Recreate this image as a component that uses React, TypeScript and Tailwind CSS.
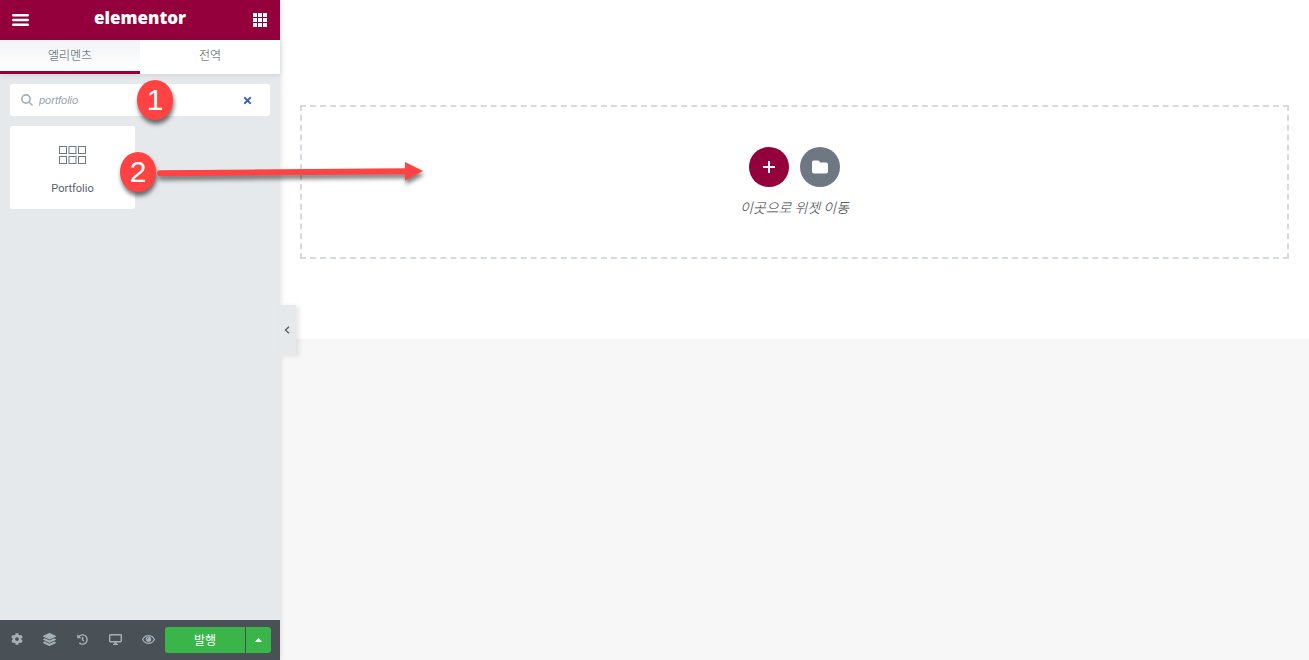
import { useState } from "react";
import type { ReactNode } from "react";
import { FaCog, FaHistory, FaLayerGroup, FaTimes } from "react-icons/fa";

const GridIcon = () => (
  <svg width="14" height="14" viewBox="0 0 14 14" fill="currentColor">
    {[0, 5, 10].map((y) =>
      [0, 5, 10].map((x) => <rect key={`${x}-${y}`} x={x} y={y} width="4" height="4" />)
    )}
  </svg>
);

const MenuIcon = () => (
  <svg width="17" height="12" viewBox="0 0 17 12" stroke="currentColor" strokeWidth="2.4" strokeLinecap="round">
    <path d="M1.2 1.3h14.6M1.2 6h14.6M1.2 10.7h14.6" />
  </svg>
);

const SearchIcon = () => (
  <svg width="12" height="12" viewBox="0 0 12 12" fill="none" stroke="currentColor" strokeWidth="1.6" strokeLinecap="round">
    <circle cx="5" cy="5" r="4.100" />
    <path d="M8.200 8.200L11 11" />
  </svg>
);

const GalleryIcon = () => (
  <svg width="27" height="19" viewBox="0 0 27 19" fill="none" stroke="currentColor" strokeWidth="1">
    {[0, 10].map((y) =>
      [0, 9.5, 19].map((x) => <rect key={`${x}-${y}`} x={x + 0.5} y={y + 0.5} width="7" height="7" />)
    )}
  </svg>
);

const DesktopIcon = () => (
  <svg width="13" height="11" viewBox="0 0 13 11" fill="none" stroke="currentColor">
    <rect x="0.7" y="0.7" width="11.6" height="7" rx="0.6" strokeWidth="1.4" />
    <path d="M6.5 7.5v2.5" strokeWidth="2.4" />
    <path d="M4 10.4h5" strokeWidth="1.2" />
  </svg>
);

const EyeIcon = () => (
  <svg width="13" height="9" viewBox="0 0 13 9" fill="none" stroke="currentColor">
    <path d="M.6 4.500C1.800 2 4 .7 6.500.7s4.700 1.300 5.900 3.800C11.200 7 9 8.300 6.500 8.300S1.800 7 .6 4.500z" strokeWidth="1.200" />
    <circle cx="6.500" cy="4.200" r="2.700" fill="currentColor" stroke="none" />
    <path d="M5.200 4.200c0-.8.5-1.300 1.300-1.300" stroke="#495157" strokeWidth=".7" />
  </svg>
);

const FolderIcon = () => (
  <svg width="16" height="14" viewBox="0 0 16 14" fill="currentColor">
    <path d="M2 .5h3.900c.6 0 1.100.2 1.400.7l1 1.300h5.700c1.100 0 2 .9 2 2v7c0 1.100-.9 2-2 2H2c-1.100 0-2-.9-2-2v-9c0-1.100.9-2 2-2z" />
  </svg>
);

const tools: { label: string; icon: ReactNode }[] = [
  { label: "Settings", icon: <FaCog size={12} /> },
  { label: "Navigator", icon: <FaLayerGroup size={13} /> },
  { label: "History", icon: <FaHistory size={11} /> },
  { label: "Responsive Mode", icon: <DesktopIcon /> },
  { label: "Preview", icon: <EyeIcon /> },
];

function Step({ n }: { n: number }) {
  return (
    <span className="flex h-10 w-9 items-center justify-center rounded-[50%] bg-[#ff4242] font-['Liberation_Sans',sans-serif] text-[30px] leading-none text-white shadow-[1px_4px_4px_rgba(0,0,0,0.55)]">
      {n}
    </span>
  );
}

function Panel() {
  const [search, setSearch] = useState("portfolio");

  return (
    <aside className="relative z-10 flex w-[280px] shrink-0 flex-col bg-[#e6e9ec] shadow-[0_0_6px_rgba(0,0,0,0.15)]">
      <header className="flex h-10 items-center justify-between bg-[#93003c] px-3 text-white">
        <button aria-label="Menu">
          <MenuIcon />
        </button>
        <h1 className="pr-0.5 pb-1 font-['Open_Sans',sans-serif] text-[17px] leading-6 font-extrabold">elementor</h1>
        <button aria-label="Widgets" className="pr-px">
          <GridIcon />
        </button>
      </header>

      <nav className="flex h-[34px] bg-white text-[12px] font-light text-[#495157] shadow-[0_1px_6px_rgba(0,0,0,0.1)]">
        <button className="flex-1 border-b-3 border-[#93003c] bg-linear-to-b from-[#f1f3f5] to-white pb-0.5">엘리멘츠</button>
        <button className="flex-1 border-b-3 border-white pb-0.5">전역</button>
      </nav>

      <main className="flex-1 p-2.5">
        <div className="relative">
          <div className="flex h-8 items-center rounded-[3px] bg-white pr-[17px] pl-[11px] text-[#a4afb7]">
            <SearchIcon />
            <input
              aria-label="Search widgets"
              className="ml-1.5 min-w-0 flex-1 font-['Liberation_Sans',sans-serif] text-[11px] text-[#9aa4ac] italic outline-none"
              value={search}
              onChange={(e) => setSearch(e.target.value)}
            />
            <button aria-label="Clear" className="text-[#3f66a8]" onClick={() => setSearch("")}>
              <FaTimes size={11} />
            </button>
          </div>
          <div className="absolute -top-1 left-[127px]">
            <Step n={1} />
          </div>
        </div>

        <div className="mt-2.5 grid grid-cols-2 gap-2.5">
          <div className="relative">
            <button className="flex w-full flex-col items-center rounded-[3px] bg-white pt-5 pb-3 text-[#6d7882]">
              <GalleryIcon />
              <span className="mt-4 font-[Roboto,sans-serif] text-[11px] leading-4 text-[#556068]">Portfolio</span>
            </button>
            <div className="absolute top-[26px] left-[110px] flex">
              <Step n={2} />
              {/* drag direction, runs over into the preview */}
              <svg className="pointer-events-none ml-px shrink-0 overflow-visible drop-shadow-[1px_4px_2px_rgba(0,0,0,0.5)]" width="266" height="38" viewBox="0 0 266 38">
                <path d="M3 21.300L250 19.200" stroke="#ff4242" strokeWidth="6" strokeLinecap="round" />
                <path d="M248 10v18.500l18-9.500z" fill="#ff4242" />
              </svg>
            </div>
          </div>
        </div>
      </main>

      <footer className="flex h-10 items-center bg-[#495157] text-[#a4afb7]">
        <div className="flex flex-1 pb-0.5">
          {tools.map((t) => (
            <button key={t.label} aria-label={t.label} className="flex h-6 flex-1 items-center justify-center">
              {t.icon}
            </button>
          ))}
        </div>
        <div className="mr-[9px] flex h-[26px] gap-px text-white">
          <button className="w-20 rounded-l-[3px] bg-[#39b54a] text-[12px]">발행</button>
          <button aria-label="Save options" className="flex w-[25px] items-center justify-center rounded-r-[3px] bg-[#39b54a]">
            <svg width="7" height="4" viewBox="0 0 7 4" fill="currentColor">
              <path d="M3.500 0L7 4H0z" />
            </svg>
          </button>
        </div>
      </footer>

      <button
        aria-label="Hide panel"
        className="absolute top-[305px] left-full flex h-[50px] w-4 items-center bg-[#e6e9ec] pl-1 text-[#556068] shadow-[3px_1px_5px_rgba(0,0,0,0.1)]"
      >
        <svg width="6" height="8" viewBox="0 0 6 8" fill="none" stroke="currentColor" strokeWidth="1.4">
          <path d="M5 .8L1.500 4 5 7.200" />
        </svg>
      </button>
    </aside>
  );
}

export default function App() {
  return (
    <div className="flex h-screen overflow-hidden bg-[#f7f7f7] font-['Noto_Sans_CJK_KR',sans-serif]">
      <Panel />
      <section className="flex-1">
        <div className="bg-white px-5 pt-[105px] pb-20">
          <div className="flex flex-col items-center border-2 border-dashed border-[#d5dadf] pt-10 pb-8">
            <div className="flex gap-[11px] text-white">
              <button aria-label="Add new section" className="flex size-10 items-center justify-center rounded-full bg-[#93003c]">
                <svg width="12" height="12" viewBox="0 0 12 12" stroke="currentColor" strokeWidth="2">
                  <path d="M6 0v12M0 6h12" />
                </svg>
              </button>
              <button aria-label="Add template" className="flex size-10 items-center justify-center rounded-full bg-[#6d7882]">
                <FolderIcon />
              </button>
            </div>
            <p className="mt-2 h-[30px] text-[14px] leading-6 font-light text-[#333a40] italic">이곳으로 위젯 이동</p>
          </div>
        </div>
      </section>
    </div>
  );
}
